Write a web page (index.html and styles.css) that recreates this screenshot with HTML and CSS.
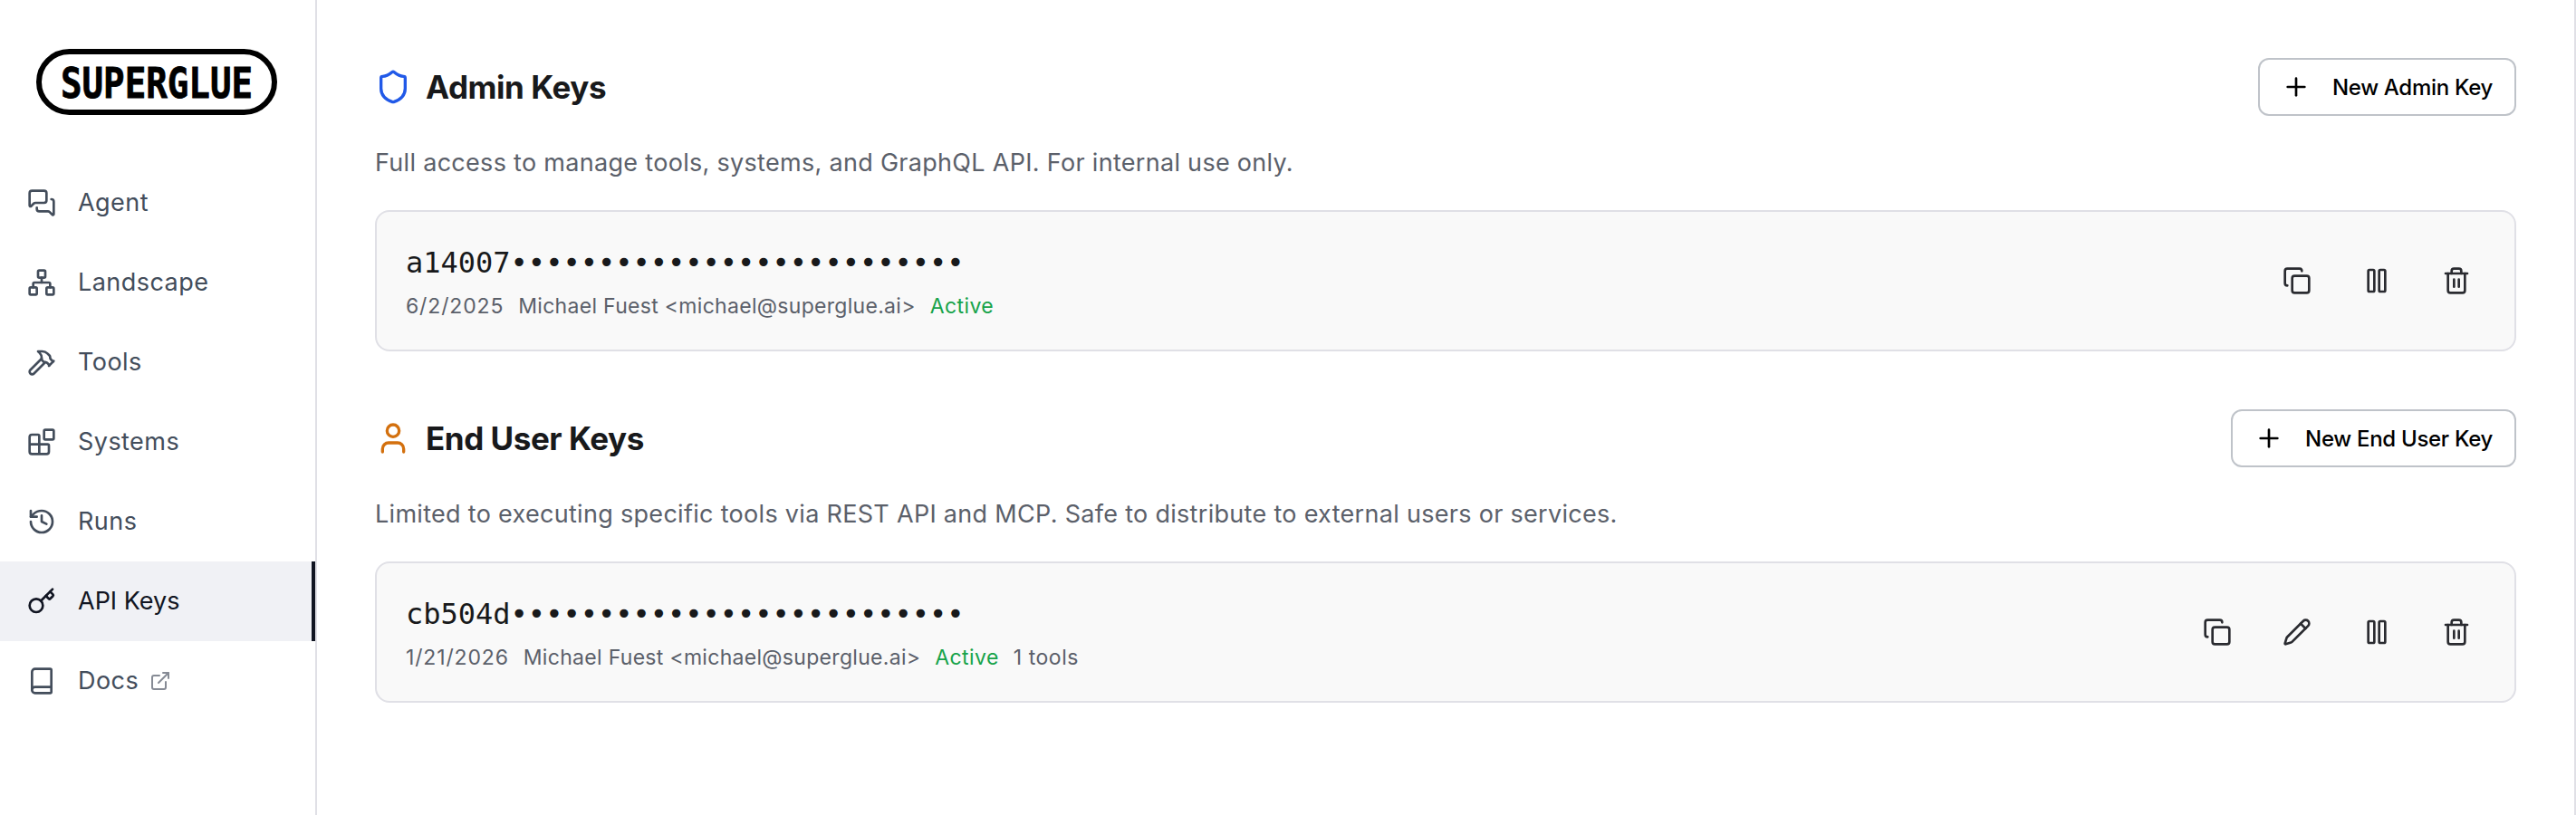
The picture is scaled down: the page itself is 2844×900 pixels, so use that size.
FILE: index.html
```
<!DOCTYPE html>
<html lang="en">
<head>
    <meta charset="UTF-8">
    <meta name="viewport" content="width=device-width, initial-scale=1.0">
    <title>API Keys - superglue</title>
    <link rel="stylesheet" href="styles.css">
</head>
<body>
    <aside class="sidebar">
        <div class="logo">
            <svg width="208" height="34" viewBox="0 0 208 34">
                <text class="logo-text" x="-2" y="33.5" textLength="212" lengthAdjust="spacingAndGlyphs">SUPERGLUE</text>
            </svg>
        </div>
        <nav class="nav">
            <a class="nav-item" href="#">
                <svg class="icon" viewBox="0 0 24 24"><path d="M16 10a2 2 0 0 1-2 2H6.828a2 2 0 0 0-1.414.586l-2.202 2.202A.71.71 0 0 1 2 14.286V4a2 2 0 0 1 2-2h10a2 2 0 0 1 2 2z"/><path d="M20 9a2 2 0 0 1 2 2v10.286a.71.71 0 0 1-1.212.502l-2.202-2.202A2 2 0 0 0 17.172 19H10a2 2 0 0 1-2-2v-1"/></svg>
                <span>Agent</span>
            </a>
            <a class="nav-item" href="#">
                <svg class="icon" viewBox="0 0 24 24"><rect x="16" y="16" width="6" height="6" rx="1"/><rect x="2" y="16" width="6" height="6" rx="1"/><rect x="9" y="2" width="6" height="6" rx="1"/><path d="M5 16v-3a1 1 0 0 1 1-1h12a1 1 0 0 1 1 1v3"/><path d="M12 12V8"/></svg>
                <span>Landscape</span>
            </a>
            <a class="nav-item" href="#">
                <svg class="icon" viewBox="0 0 24 24"><path d="m15 12-9.373 9.373a1 1 0 0 1-3.001-3L12 9"/><path d="m18 15 4-4"/><path d="m21.5 11.5-1.914-1.914A2 2 0 0 1 19 8.172v-.344a2 2 0 0 0-.586-1.414l-1.657-1.657A6 6 0 0 0 12.516 3H9l1.243 1.243A6 6 0 0 1 12 8.485V10l2 2h1.172a2 2 0 0 1 1.414.586L18.5 14.5"/></svg>
                <span>Tools</span>
            </a>
            <a class="nav-item" href="#">
                <svg class="icon" viewBox="0 0 24 24"><rect x="14" y="2" width="8" height="8" rx="1"/><path d="M10 22V7a1 1 0 0 0-1-1H4a2 2 0 0 0-2 2v12a2 2 0 0 0 2 2h12a2 2 0 0 0 2-2v-5a1 1 0 0 0-1-1H2"/></svg>
                <span>Systems</span>
            </a>
            <a class="nav-item" href="#">
                <svg class="icon" viewBox="0 0 24 24"><path d="M3 12a9 9 0 1 0 9-9 9.75 9.75 0 0 0-6.74 2.74L3 8"/><path d="M3 3v5h5"/><path d="M12 7v5l4 2"/></svg>
                <span>Runs</span>
            </a>
            <a class="nav-item active" href="#">
                <svg class="icon" viewBox="0 0 24 24"><path d="m15.5 7.5 2.3 2.3a1 1 0 0 0 1.4 0l2.1-2.1a1 1 0 0 0 0-1.4L19 4"/><path d="m21 2-9.6 9.6"/><circle cx="7.5" cy="15.5" r="5.5"/></svg>
                <span>API Keys</span>
            </a>
            <a class="nav-item" href="#">
                <svg class="icon" viewBox="0 0 24 24"><path d="M4 19.5v-15A2.5 2.5 0 0 1 6.5 2H19a1 1 0 0 1 1 1v18a1 1 0 0 1-1 1H6.5a1 1 0 0 1 0-5H20"/></svg>
                <span>Docs</span>
                <svg class="icon icon-external" viewBox="0 0 24 24"><path d="M15 3h6v6"/><path d="M10 14 21 3"/><path d="M18 13v6a2 2 0 0 1-2 2H5a2 2 0 0 1-2-2V8a2 2 0 0 1 2-2h6"/></svg>
            </a>
        </nav>
    </aside>

    <main class="content">
        <section class="key-section">
            <div class="section-header">
                <svg class="icon icon-section icon-shield" viewBox="0 0 24 24"><path d="M20 13c0 5-3.5 7.5-7.66 8.95a1 1 0 0 1-.67-.01C7.5 20.5 4 18 4 13V6a1 1 0 0 1 1-1c2 0 4.5-1.2 6.24-2.72a1.17 1.17 0 0 1 1.52 0C14.51 3.81 17 5 19 5a1 1 0 0 1 1 1z"/></svg>
                <h2>Admin Keys</h2>
                <button class="new-key">
                    <svg class="icon" viewBox="0 0 24 24"><path d="M5 12h14"/><path d="M12 5v14"/></svg>
                    <span>New Admin Key</span>
                </button>
            </div>
            <p class="description">Full access to manage tools, systems, and GraphQL API. For internal use only.</p>
            <div class="key-card">
                <div class="key-info">
                    <code>a14007••••••••••••••••••••••••••</code>
                    <div class="key-meta">
                        <span class="date">6/2/2025</span>
                        <span class="owner">Michael Fuest &lt;michael@superglue.ai&gt;</span>
                        <span class="status">Active</span>
                    </div>
                </div>
                <div class="key-actions">
                    <button title="Copy"><svg class="icon" viewBox="0 0 24 24"><rect x="8" y="8" width="14" height="14" rx="2"/><path d="M4 16c-1.1 0-2-.9-2-2V4c0-1.1.9-2 2-2h10c1.1 0 2 .9 2 2"/></svg></button>
                    <button title="Pause"><svg class="icon" viewBox="0 0 24 24"><rect x="14" y="3" width="5" height="18" rx="1"/><rect x="5" y="3" width="5" height="18" rx="1"/></svg></button>
                    <button title="Delete"><svg class="icon" viewBox="0 0 24 24"><path d="M10 11v6"/><path d="M14 11v6"/><path d="M19 6v14a2 2 0 0 1-2 2H7a2 2 0 0 1-2-2V6"/><path d="M3 6h18"/><path d="M8 6V4a2 2 0 0 1 2-2h4a2 2 0 0 1 2 2v2"/></svg></button>
                </div>
            </div>
        </section>

        <section class="key-section">
            <div class="section-header">
                <svg class="icon icon-section icon-user" viewBox="0 0 24 24"><path d="M19 21v-2a4 4 0 0 0-4-4H9a4 4 0 0 0-4 4v2"/><circle cx="12" cy="7" r="4"/></svg>
                <h2>End User Keys</h2>
                <button class="new-key">
                    <svg class="icon" viewBox="0 0 24 24"><path d="M5 12h14"/><path d="M12 5v14"/></svg>
                    <span>New End User Key</span>
                </button>
            </div>
            <p class="description">Limited to executing specific tools via REST API and MCP. Safe to distribute to external users or services.</p>
            <div class="key-card">
                <div class="key-info">
                    <code>cb504d••••••••••••••••••••••••••</code>
                    <div class="key-meta">
                        <span class="date">1/21/2026</span>
                        <span class="owner">Michael Fuest &lt;michael@superglue.ai&gt;</span>
                        <span class="status">Active</span>
                        <span class="tools">1 tools</span>
                    </div>
                </div>
                <div class="key-actions">
                    <button title="Copy"><svg class="icon" viewBox="0 0 24 24"><rect x="8" y="8" width="14" height="14" rx="2"/><path d="M4 16c-1.1 0-2-.9-2-2V4c0-1.1.9-2 2-2h10c1.1 0 2 .9 2 2"/></svg></button>
                    <button title="Edit"><svg class="icon" viewBox="0 0 24 24"><path d="M21.174 6.812a1 1 0 0 0-3.986-3.987L3.842 16.174a2 2 0 0 0-.5.83l-1.321 4.352a.5.5 0 0 0 .623.622l4.353-1.32a2 2 0 0 0 .83-.497z"/><path d="m15 5 4 4"/></svg></button>
                    <button title="Pause"><svg class="icon" viewBox="0 0 24 24"><rect x="14" y="3" width="5" height="18" rx="1"/><rect x="5" y="3" width="5" height="18" rx="1"/></svg></button>
                    <button title="Delete"><svg class="icon" viewBox="0 0 24 24"><path d="M10 11v6"/><path d="M14 11v6"/><path d="M19 6v14a2 2 0 0 1-2 2H7a2 2 0 0 1-2-2V6"/><path d="M3 6h18"/><path d="M8 6V4a2 2 0 0 1 2-2h4a2 2 0 0 1 2 2v2"/></svg></button>
                </div>
            </div>
        </section>
    </main>
</body>
</html>
```
FILE: styles.css
```
:root {
    --text: #18191b;
    --muted: #5b606a;
    --nav-text: #434d5b;
    --border: #e0e0e6;
    --card: #f9f9f9;
    --font-family: Inter, "Liberation Sans", sans-serif;
}

* {
    box-sizing: border-box;
    margin: 0;
    padding: 0;
}

body {
    display: flex;
    height: 100vh;
    background: #fff;
    color: var(--text);
    font-family: var(--font-family);
    font-size: 27px;
}

button {
    border: none;
    background: transparent;
    font-family: inherit;
    cursor: pointer;
}

.icon {
    display: block;
    flex: none;
    width: 32px;
    height: 32px;
    fill: none;
    stroke: currentColor;
    stroke-width: 2;
    stroke-linecap: round;
    stroke-linejoin: round;
}

/* Sidebar */
.sidebar {
    flex: none;
    width: 350px;
    border-right: 2px solid var(--border);
}

.logo {
    display: flex;
    align-items: center;
    justify-content: center;
    width: 266px;
    height: 73px;
    margin: 54px 0 53px 40px;
    border: 6px solid #000;
    border-radius: 37px;
}

.logo svg {
    overflow: visible;
}

.logo-text {
    font-family: "DejaVu Sans Mono", monospace;
    font-size: 46px;
    font-weight: bold;
    stroke: #000;
    stroke-width: 0.8;
}

.nav-item {
    display: flex;
    align-items: center;
    height: 88px;
    padding-left: 30px;
    color: var(--nav-text);
    text-decoration: none;
}

.nav-item span {
    margin-left: 24px;
    padding-bottom: 2px;
    letter-spacing: 0.45px;
}

.nav-item.active {
    background: #f0f1f5;
    border-right: 4px solid #111522;
    color: #111522;
}

.nav-item.active span {
    letter-spacing: 0;
}

.icon-external {
    width: 24px;
    height: 24px;
    margin-left: 12px;
    color: #868b95;
}

/* Content */
.content {
    flex: 1;
    padding: 64px 64px 0;
    border-right: 2px solid var(--border);
}

.key-section {
    margin-bottom: 64px;
}

.section-header {
    display: flex;
    align-items: center;
    height: 64px;
}

.icon-section {
    width: 40px;
    height: 40px;
    margin-right: 16px;
}

.icon-shield {
    color: #2159e8;
}

.icon-user {
    color: #d3700e;
}

h2 {
    font-size: 35px;
    font-weight: 700;
    letter-spacing: -0.45px;
}

.new-key {
    display: flex;
    align-items: center;
    gap: 24px;
    height: 64px;
    margin-left: auto;
    padding: 0 24px;
    border: 2px solid #bfc3c9;
    border-radius: 12px;
    color: #000;
    font-size: 24px;
    font-weight: 500;
    letter-spacing: -0.3px;
}

.description {
    margin: 32px 0;
    color: var(--muted);
    line-height: 40px;
    letter-spacing: 0.3px;
    white-space: nowrap;
}

.key-card {
    display: flex;
    align-items: center;
    justify-content: space-between;
    height: 156px;
    padding: 0 32px;
    background: var(--card);
    border: 2px solid var(--border);
    border-radius: 16px;
}

.key-info code {
    display: block;
    font-family: "DejaVu Sans Mono", monospace;
    font-size: 32px;
    line-height: 48px;
}

.key-meta {
    display: flex;
    gap: 16px;
    margin-top: 8px;
    color: var(--muted);
    font-size: 23px;
    line-height: 32px;
    letter-spacing: 0.3px;
}

.date {
    letter-spacing: 0.85px;
}

.status {
    color: #16a34a;
    letter-spacing: 0.4px;
}

.tools {
    letter-spacing: 0.55px;
}

.key-actions {
    display: flex;
    gap: 24px;
}

.key-actions button {
    display: flex;
    align-items: center;
    justify-content: center;
    width: 64px;
    height: 64px;
    color: #2a2b30;
}
```
